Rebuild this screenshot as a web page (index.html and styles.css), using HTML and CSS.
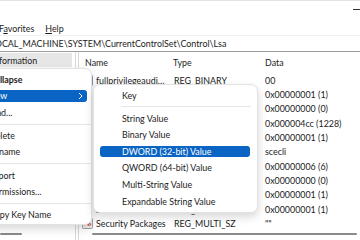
FILE: index.html
```html
<!DOCTYPE html>
<html lang="en">
<head>
    <meta charset="UTF-8">
    <title>Registry Editor</title>
    <link rel="stylesheet" href="styles.css">
</head>
<body>
    <div class="window">
        <div class="titlebar">
            <span class="min-btn"></span>
        </div>

        <div class="menubar">
            <span class="menubar-item first">F<u>a</u>vorites</span>
            <span class="menubar-item"><u>H</u>elp</span>
        </div>

        <div class="address">
            <span class="address-path">Computer\HKEY_LOCAL_MACHINE\SYSTEM\CurrentControlSet\Control\Lsa</span>
        </div>

        <div class="panes">
            <div class="tree">
                <div class="tree-body">
                    <div class="tree-row selected"><span class="tree-label">LsaInformation</span></div>
                </div>
                <div class="hscroll tree-scroll"></div>
            </div>

            <div class="splitter"></div>

            <div class="list">
                <div class="list-head">
                    <span class="cell name">Name</span>
                    <span class="cell type">Type</span>
                    <span class="cell data">Data</span>
                </div>
                <div class="list-body">
                    <div class="row">
                        <span class="cell name"><svg class="val-icon" viewBox="0 0 12 12"><rect x="0.5" y="0.5" width="11" height="11" rx="1" fill="#e8eef8" stroke="#7a8fb0"/><path d="M3 4h2M7 4h2M3 8h2M7 8h2" stroke="#2f62b5"/></svg><span class="name-text">fullprivilegeauditing</span></span>
                        <span class="cell type">REG_BINARY</span>
                        <span class="cell data">00</span>
                    </div>
                    <div class="row">
                        <span class="cell name"><span class="name-text">LimitBlankPasswordUse</span></span>
                        <span class="cell type">REG_DWORD</span>
                        <span class="cell data">0x00000001 (1)</span>
                    </div>
                    <div class="row">
                        <span class="cell name"><span class="name-text">LsaCfgFlagsDefault</span></span>
                        <span class="cell type">REG_DWORD</span>
                        <span class="cell data">0x00000000 (0)</span>
                    </div>
                    <div class="row">
                        <span class="cell name"><span class="name-text">LsaPid</span></span>
                        <span class="cell type">REG_DWORD</span>
                        <span class="cell data">0x000004cc (1228)</span>
                    </div>
                    <div class="row">
                        <span class="cell name"><span class="name-text">NoLmHash</span></span>
                        <span class="cell type">REG_DWORD</span>
                        <span class="cell data">0x00000001 (1)</span>
                    </div>
                    <div class="row">
                        <span class="cell name"><span class="name-text">Notification Packages</span></span>
                        <span class="cell type">REG_MULTI_SZ</span>
                        <span class="cell data">scecli</span>
                    </div>
                    <div class="row">
                        <span class="cell name"><span class="name-text">ProductType</span></span>
                        <span class="cell type">REG_DWORD</span>
                        <span class="cell data">0x00000006 (6)</span>
                    </div>
                    <div class="row">
                        <span class="cell name"><span class="name-text">restrictanonymous</span></span>
                        <span class="cell type">REG_DWORD</span>
                        <span class="cell data">0x00000000 (0)</span>
                    </div>
                    <div class="row">
                        <span class="cell name"><span class="name-text">restrictanonymoussam</span></span>
                        <span class="cell type">REG_DWORD</span>
                        <span class="cell data">0x00000001 (1)</span>
                    </div>
                    <div class="row">
                        <span class="cell name"><span class="name-text">SecureBoot</span></span>
                        <span class="cell type">REG_DWORD</span>
                        <span class="cell data">0x00000001 (1)</span>
                    </div>
                    <div class="row">
                        <span class="cell name"><svg class="val-icon" viewBox="0 0 12 12"><rect x="0.5" y="0.5" width="11" height="11" rx="1" fill="#f4efef" stroke="#9a9a9a"/><path d="M3 8l1.5-4 1.5 4M7 4v4h1.5a1 1 0 0 0 0-2H7" stroke="#c0392b" fill="none"/></svg><span class="name-text">Security Packages</span></span>
                        <span class="cell type">REG_MULTI_SZ</span>
                        <span class="cell data">""</span>
                    </div>
                </div>
                <div class="hscroll list-scroll"></div>
            </div>
        </div>
    </div>

    <!-- context menu on the Lsa key -->
    <div class="ctx-menu main-menu">
        <div class="ctx-item default">Collapse</div>
        <div class="ctx-item active">New
            <svg class="chevron" viewBox="0 0 5 8"><path d="M1 1l3 3-3 3" fill="none" stroke="#fff" stroke-width="1"/></svg>
        </div>
        <div class="ctx-item">Find...</div>
        <div class="ctx-sep"></div>
        <div class="ctx-item">Delete</div>
        <div class="ctx-item">Rename</div>
        <div class="ctx-sep"></div>
        <div class="ctx-item">Export</div>
        <div class="ctx-item">Permissions...</div>
        <div class="ctx-sep"></div>
        <div class="ctx-item">Copy Key Name</div>
    </div>

    <!-- New submenu -->
    <div class="ctx-menu sub-menu">
        <div class="ctx-item">Key</div>
        <div class="ctx-sep"></div>
        <div class="ctx-item">String Value</div>
        <div class="ctx-item">Binary Value</div>
        <div class="ctx-item active">DWORD (32-bit) Value</div>
        <div class="ctx-item">QWORD (64-bit) Value</div>
        <div class="ctx-item">Multi-String Value</div>
        <div class="ctx-item">Expandable String Value</div>
    </div>
</body>
</html>
```

FILE: styles.css
```css
* {
    margin: 0;
    padding: 0;
    box-sizing: border-box;
}

body {
    width: 360px;
    height: 240px;
    overflow: hidden;
    position: relative;
    background: #fff;
    font-family: Lato, 'Open Sans', sans-serif;
    font-size: 8.9px;
    color: #1b1b1b;
}

.window {
    display: flex;
    flex-direction: column;
    height: 240px;
}

.titlebar {
    height: 21px;
    border-top: 1px solid #e3e3e3;
    display: flex;
    justify-content: flex-end;
    align-items: center;
}

.min-btn {
    width: 7px;
    height: 1px;
    background: #333;
    margin-top: -3px;
}

.menubar {
    height: 15px;
    display: flex;
    align-items: center;
    gap: 11px;
    border-bottom: 1px solid #f0f0f0;
}

.menubar-item.first {
    margin-left: -1px;
}

.address {
    height: 16px;
    display: flex;
    align-items: center;
    border-bottom: 1px solid #9c9c9c;
    white-space: nowrap;
}

.address-path {
    margin-left: -80px;
}

.panes {
    flex: 1;
    display: flex;
    min-height: 0;
}

.tree {
    width: 75px;
    display: flex;
    flex-direction: column;
    overflow: hidden;
}

.tree-body {
    flex: 1;
    padding-top: 1px;
}

.tree-row {
    height: 14px;
    padding-top: 1px;
    display: flex;
    align-items: center;
    white-space: nowrap;
    margin-right: 3px;
}

.tree-row.selected {
    background: #e6e6e6;
}

.tree-label {
    margin-left: -21px;
}

.splitter {
    width: 4px;
    border-left: 1px solid #d9d9d9;
    border-right: 1px solid #d9d9d9;
}

.list {
    flex: 1;
    display: flex;
    flex-direction: column;
    overflow: hidden;
}

.list-head,
.row {
    display: grid;
    grid-template-columns: 91px 91px 1fr;
    white-space: nowrap;
}

.list-head {
    height: 21px;
    align-items: center;
}

.list-head .cell.name {
    padding-left: 6px;
}

.list-head .cell.type {
    padding-left: 3px;
}

.list-body {
    flex: 1;
    overflow: hidden;
}

.row {
    height: 14.35px;
    align-items: center;
}

.cell {
    overflow: hidden;
    text-overflow: ellipsis;
    padding-left: 4px;
}

.row .cell.name {
    display: flex;
    align-items: center;
    gap: 3px;
    padding-left: 3px;
    padding-right: 2px;
}

.name-text {
    overflow: hidden;
    text-overflow: ellipsis;
    margin-left: 14px;
}

.val-icon {
    width: 11px;
    height: 11px;
    flex: none;
}

.val-icon + .name-text {
    margin-left: 0;
}

.hscroll {
    height: 2px;
    background: #8a8a8a;
    border-radius: 1px;
    margin-bottom: 5px;
}

.tree-scroll {
    width: 22px;
}

.list-scroll {
    margin-left: 13px;
    margin-right: 3px;
}

/* context menus */

.ctx-menu {
    position: absolute;
    display: flex;
    flex-direction: column;
    background: #fff;
    border: 1px solid #e2e2e2;
    border-radius: 7px;
    box-shadow: 0 4px 10px rgba(0, 0, 0, 0.16);
    padding: 2px 0;
    white-space: nowrap;
}

.main-menu {
    left: -40px;
    top: 68px;
    width: 132px;
    padding-bottom: 0;
}

.sub-menu {
    left: 93px;
    top: 84px;
    width: 165px;
}

.ctx-item {
    height: 11.6px;
    line-height: 11.6px;
    margin: 2.5px 4px;
    padding-left: 24px;
    border-radius: 3px;
    position: relative;
    flex: none;
}

.sub-menu .ctx-item {
    margin: 2.5px 7px 2.5px 6px;
    padding-left: 22px;
}

.ctx-item.default {
    font-weight: bold;
}

.ctx-item.active {
    background: #0a64c4;
    color: #fff;
}

.chevron {
    position: absolute;
    right: 4px;
    top: 2px;
    width: 5px;
    height: 8px;
}

.ctx-sep {
    height: 1px;
    flex: none;
    background: #e6e6e6;
    margin: 2.8px 0 2.8px 4px;
}

.sub-menu .ctx-sep {
    margin: 2.8px 6px 2.8px 27px;
}
```
